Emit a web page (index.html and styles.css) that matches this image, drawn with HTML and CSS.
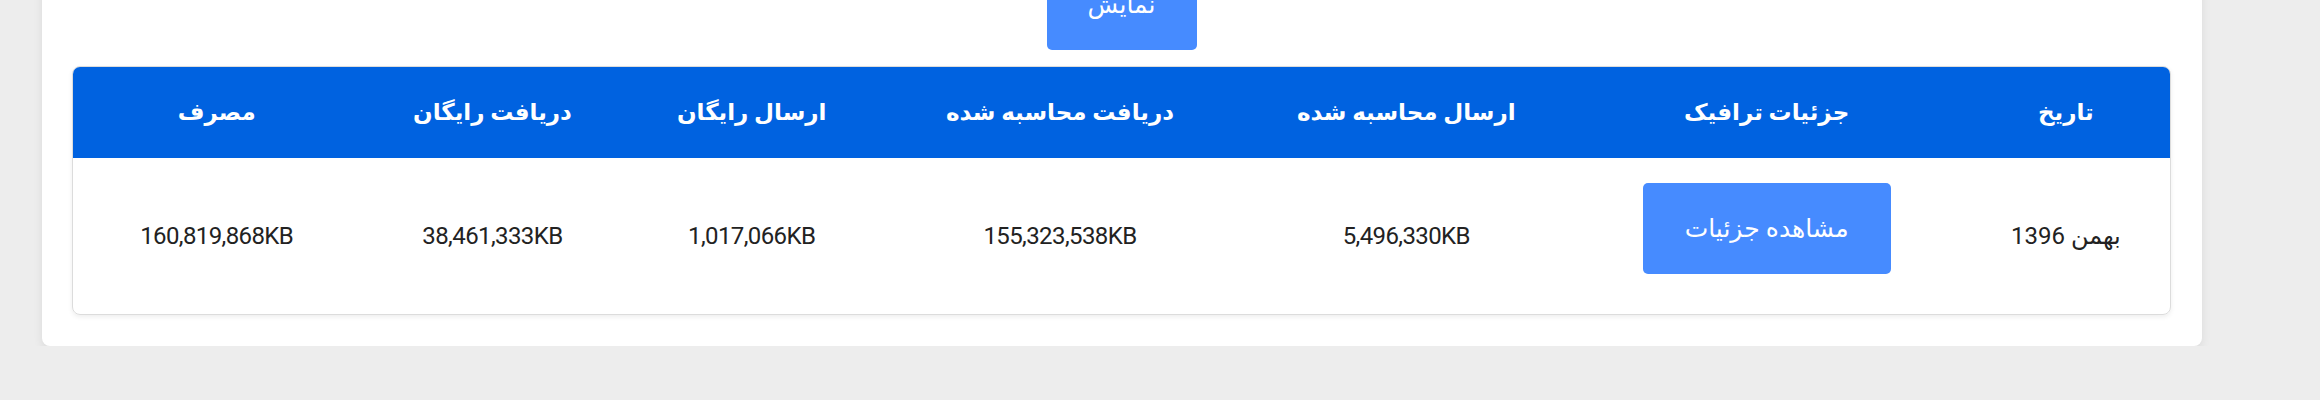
FILE: index.html
```html
<!DOCTYPE html>
<html lang="fa" dir="rtl">
<head>
  <meta charset="UTF-8">
  <meta name="viewport" content="width=device-width, initial-scale=1.0">
  <title>گزارش ترافیک</title>
  <link rel="stylesheet" href="styles.css">
</head>
<body>
  <div class="page">
    <div class="panel">
      <div class="filter-actions">
        <button type="button" class="btn">نمایش</button>
      </div>

      <div class="table-card">
        <table class="traffic-table">
          <thead>
            <tr>
              <th class="col-date">تاریخ</th>
              <th class="col-details">جزئیات ترافیک</th>
              <th class="col-sent">ارسال محاسبه شده</th>
              <th class="col-received">دریافت محاسبه شده</th>
              <th class="col-free-sent">ارسال رایگان</th>
              <th class="col-free-received">دریافت رایگان</th>
              <th class="col-usage">مصرف</th>
            </tr>
          </thead>
          <tbody>
            <tr>
              <td>بهمن 1396</td>
              <td><button type="button" class="btn btn-details">مشاهده جزئیات</button></td>
              <td>5,496,330KB</td>
              <td>155,323,538KB</td>
              <td>1,017,066KB</td>
              <td>38,461,333KB</td>
              <td>160,819,868KB</td>
            </tr>
          </tbody>
        </table>
      </div>
    </div>
  </div>
</body>
</html>
```

FILE: styles.css
```css
/* Basic Reset */
* {
  margin: 0;
  padding: 0;
  box-sizing: border-box;
}

body {
  font-family: Roboto, "DejaVu Sans", sans-serif;
  background-color: #ededed;
  color: #222;
  font-size: 24px;
}

.page {
  padding: 0 118px 0 42px;
}

.panel {
  background-color: #ffffff;
  border-radius: 8px;
  box-shadow: 0 4px 10px rgba(0, 0, 0, 0.08);
  margin-top: -71px;
  padding: 30px 31px 31px 30px;
}

.filter-actions {
  text-align: center;
  margin-bottom: 16px;
}

.btn {
  font-family: Roboto, "DejaVu Sans", sans-serif;
  font-size: 25px;
  line-height: 31px;
  color: #fff;
  background-color: #468bff;
  border: none;
  border-radius: 5px;
  padding: 30px 0;
  width: 150px;
  cursor: pointer;
}

.btn-details {
  width: 248px;
  margin-bottom: 14px;
}

.table-card {
  border: 1px solid #dcdcdc;
  border-radius: 8px;
  overflow: hidden;
  box-shadow: 0 2px 5px rgba(0, 0, 0, 0.07);
}

.traffic-table {
  width: 100%;
  border-collapse: collapse;
  table-layout: fixed;
}

.traffic-table th {
  background-color: #0062e0;
  color: #fff;
  font-size: 23px;
  font-weight: bold;
  height: 91px;
  text-align: center;
  vertical-align: middle;
}

.traffic-table td {
  text-align: center;
  vertical-align: middle;
  padding: 25px 0 26px;
  line-height: 30px;
  letter-spacing: -0.6px;
}

.col-date { width: 208px; }
.col-details { width: 390px; }
.col-sent { width: 330px; }
.col-received { width: 362px; }
.col-free-sent { width: 254px; }
.col-free-received { width: 264px; }
.col-usage { width: 287px; }
```
